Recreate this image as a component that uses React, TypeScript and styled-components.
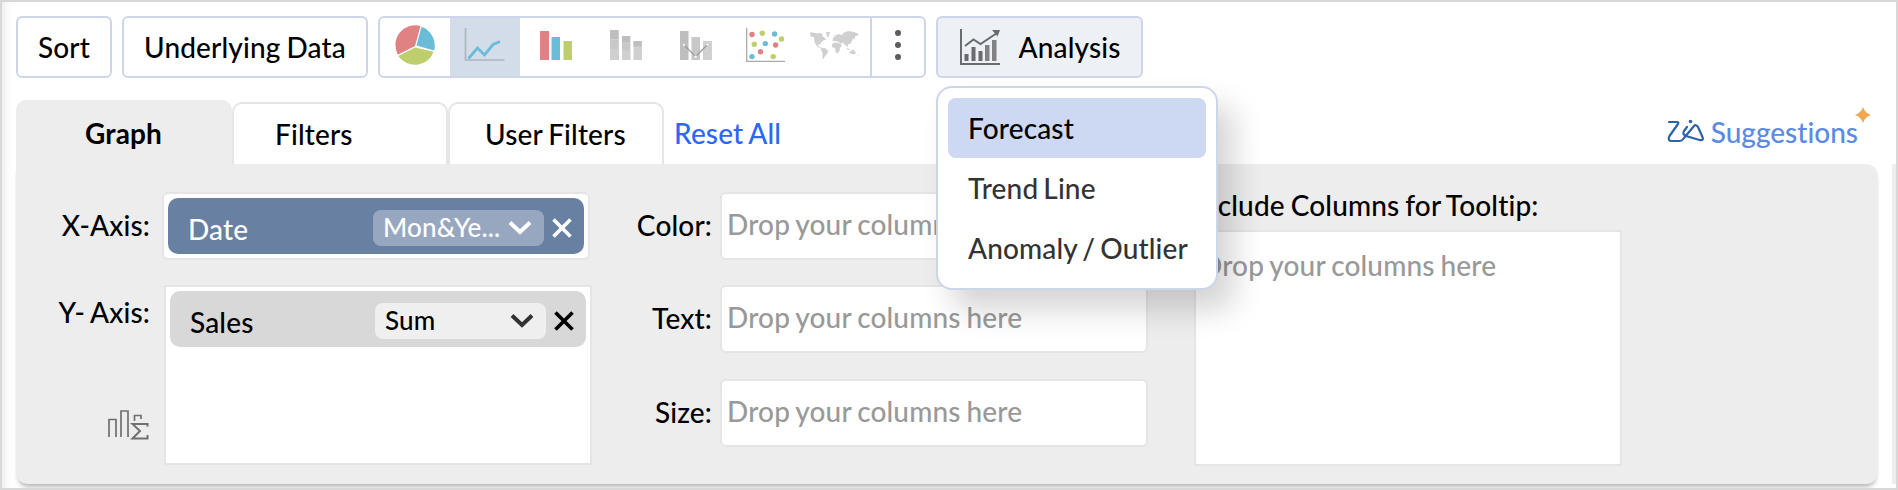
import React from "react";
import styled, { createGlobalStyle, css } from "styled-components";

const GlobalStyle = createGlobalStyle`
  * { box-sizing: border-box; }
  body { margin: 0; background: #fff; font-family: Lato, "Liberation Sans", sans-serif; font-size: 28px; font-weight: 500; line-height: 34px; letter-spacing: 0.15px; color: #000; font-variant-ligatures: none; word-spacing: -1.3px; }
  button { font: inherit; color: inherit; margin: 0; padding: 0; background: none; border: 0; word-spacing: inherit; letter-spacing: inherit; }
  svg { display: block; flex: none; }
`;

const Frame = styled.main`
  width: 1898px;
  height: 490px;
  border: 2px solid #d8d8d8;
  padding: 14px 0 0 14px;
  overflow: hidden;
  position: relative;
  box-shadow: inset 9px 0 8px -6px rgba(0, 0, 0, 0.08);
`;

const Toolbar = styled.div`
  display: flex;
  gap: 10px;
  height: 62px;
`;

const ToolButton = styled.button<{ $width: number; $active?: boolean }>`
  display: flex;
  align-items: center;
  justify-content: center;
  width: ${(p) => p.$width}px;
  height: 62px;
  border: 2px solid #cdd5ea;
  border-radius: 6px;
  background: ${(p) => (p.$active ? "#edf0f5" : "#fff")};
`;

const AnalysisLabel = styled.span`
  margin-left: 18px;
`;

const ChartGroup = styled.div`
  display: flex;
  width: 548px;
  border: 2px solid #cdd5ea;
  border-radius: 6px;
  overflow: hidden;
`;

const ChartButton = styled.button<{ $selected?: boolean }>`
  width: 70px;
  height: 58px;
  background: ${(p) => (p.$selected ? "#d2dde9" : "transparent")};
`;

const MoreButton = styled.button`
  flex: 1;
  border-left: 2px solid #cdd5ea;
`;

const AnalysisAnchor = styled.div`
  position: relative;
`;

const Menu = styled.ul`
  position: absolute;
  z-index: 2;
  top: 70px;
  left: 0;
  width: 282px;
  height: 204px;
  margin: 0;
  padding: 10px;
  list-style: none;
  background: #fff;
  border: 2px solid #cdd5ea;
  border-radius: 16px;
  box-shadow: 16px 20px 30px rgba(0, 0, 0, 0.17);
`;

const MenuItem = styled.li<{ $active?: boolean }>`
  height: 60px;
  padding: 13px 0 0 20px;
  border-radius: 8px;
  white-space: nowrap;
  word-spacing: -2.2px;
  color: ${(p) => (p.$active ? "#000" : "#333")};
  background: ${(p) => (p.$active ? "#cdd9f3" : "transparent")};
`;

const TabRow = styled.div`
  display: flex;
  align-items: flex-end;
  height: 64px;
  margin-top: 22px;
`;

const Tab = styled.button<{ $active?: boolean; $shift: number }>`
  width: 216px;
  height: 62px;
  padding: 0 0 0 ${(p) => p.$shift}px;
  text-align: left;
  background: #fff;
  border: 2px solid #e5e5e5;
  border-bottom: 0;
  border-radius: 10px 10px 0 0;
  ${(p) =>
    p.$active &&
    css`
      height: 64px;
      font-weight: 700;
      background: #ededed;
      border-color: #ededed;
    `}
`;

const ResetLink = styled.a`
  align-self: center;
  margin-left: 10px;
  padding-top: 2px;
  color: #2c66fb;
`;

const Suggestions = styled.div`
  display: flex;
  align-items: center;
  align-self: stretch;
  margin-left: auto;
  padding-right: 25px;
  color: #5b8ae6;
`;

const SuggestionsText = styled.span`
  margin: 0 0 0 6px;
  letter-spacing: 0;
`;

const Spark = styled.svg`
  margin: -34px 0 0 -3px;
`;

const PanelRow = styled.div`
  display: flex;
  justify-content: space-between;
  height: 320px;
`;

const Panel = styled.section`
  display: flex;
  width: 1862px;
  height: 320px;
  background: #ededed;
  border-radius: 0 12px 12px 12px;
  box-shadow: 0 5px 4px -2px rgba(0, 0, 0, 0.28);
`;

const SideEdge = styled.div`
  width: 4px;
  background: #ededed;
`;

const LabelColumn = styled.div<{ $width: number }>`
  width: ${(p) => p.$width}px;
  text-align: right;
  display: flex;
  flex-direction: column;
  align-items: flex-end;
`;

const FieldLabel = styled.div<{ $gap: number }>`
  margin-top: ${(p) => p.$gap}px;
  height: 34px;
  white-space: nowrap;
`;

const AxisColumn = styled.div`
  margin-left: 12px;
  width: 430px;
  padding-top: 28px;
`;

const DropBox = styled.div<{ $height: number; $square?: boolean }>`
  width: 428px;
  height: ${(p) => p.$height}px;
  padding: 4px;
  background: #fff;
  border: 2px solid #e5e5e5;
  border-radius: ${(p) => (p.$square ? 0 : 6)}px;
`;

const YBoxRow = styled.div`
  margin: 25px 0 0 2px;
`;

const Pill = styled.div<{ $tone: "blue" | "gray" }>`
  display: flex;
  align-items: center;
  width: 416px;
  height: 56px;
  padding: 0 12px 0 20px;
  border-radius: 10px;
  color: ${(p) => (p.$tone === "blue" ? "#fff" : "#000")};
  background: ${(p) => (p.$tone === "blue" ? "#6880a1" : "#d8d8d8")};
`;

const PillName = styled.span`
  flex: 1;
  padding-top: 5px;
`;

const Select = styled.button<{ $tone: "blue" | "gray" }>`
  display: flex;
  align-items: center;
  justify-content: space-between;
  width: 171px;
  height: 36px;
  margin: 4px 8px 0 0;
  padding: 0 12px 3px 10px;
  border-radius: 8px;
  font-size: 26px;
  background: ${(p) => (p.$tone === "blue" ? "#98a7c0" : "#efefef")};
`;

const CloseIcon = styled.svg`
  margin-top: 4px;
`;

const DropColumn = styled.div`
  display: grid;
  grid-template-rows: 93px 94px 68px;
  align-content: start;
  margin-left: 8px;
  padding-top: 28px;
`;

const Placeholder = styled.div<{ $top: number }>`
  padding: ${(p) => p.$top}px 0 0 1px;
  color: #999;
  white-space: nowrap;
`;

const TooltipColumn = styled.div`
  margin-left: 46px;
  padding-top: 24px;
`;

const TooltipTitle = styled.div`
  height: 42px;
  white-space: nowrap;
`;

const Pie = () => (
  <svg width="70" height="58">
    <path d="M35 28 L40.5 7.9 A20 20 0 0 0 17.8 36.8Z" fill="#e08283" />
    <path d="M36.5 27.4 L41.5 8.8 A20 20 0 0 1 54.2 32.5Z" fill="#6bbcd7" />
    <path d="M35 29.4 L53.7 33.7 A20 20 0 0 1 18.3 38Z" fill="#bece6c" />
  </svg>
);

const Line = () => (
  <svg width="70" height="58" fill="none">
    <path d="M15.5 10V42H54.5" stroke="#b0b5bd" strokeWidth="1.7" />
    <path d="M18.5 40.5L27.5 30L34.5 37L43 26.5L50 23.5" stroke="#6bbcd7" strokeWidth="2.8" />
  </svg>
);

const Bars = () => (
  <svg width="70" height="58">
    <path d="M20 13h9v29h-9z" fill="#e08283" />
    <path d="M31.5 19h8.500v23h-8.500z" fill="#6bbcd7" />
    <path d="M43.5 23h8.500v19h-8.500z" fill="#bece6c" />
  </svg>
);

const Stacked = () => (
  <svg width="70" height="58">
    <path d="M20 12h9v30h-9zM32 18h8.500v24h-8.500zM43.500 23h8.500v19h-8.500z" fill="#d0d0d0" />
    <path d="M20 22h8v9h-8zM32 25.500h8v7h-8z" fill="#c8c8c8" />
    <path d="M20 12h8v9h-8zM32 18h8v6.500h-8zM43.500 23h8v5.500h-8z" fill="#bebebe" />
  </svg>
);

const Combo = () => (
  <svg width="70" height="58">
    <path d="M20 13h8.500v29H20z" fill="#bebebe" />
    <path d="M31.500 19h8.500v23h-8.500z" fill="#c8c8c8" />
    <path d="M43 23h9v19h-9z" fill="#d0d0d0" />
    <path d="M24 27L35.700 38.700L47.500 26.500" fill="none" stroke="#999" strokeWidth="1.2" />
    <g fill="#fff" stroke="#aaa" strokeWidth=".5">
      <circle cx="24" cy="27" r="1.4" /><circle cx="35.7" cy="38.7" r="1.5" /><circle cx="47.5" cy="26.5" r="1.4" />
    </g>
  </svg>
);

const scatterPoints: [number, number, string][] = [
  [22, 16.5, "#e08283"], [32.3, 15.3, "#bece6c"], [44.6, 16, "#6bbcd7"], [51.5, 21, "#bece6c"],
  [24.3, 26.2, "#bece6c"], [35.3, 25.6, "#6bbcd7"], [45.6, 27, "#e08283"], [30.5, 33.7, "#e08283"],
  [22, 38.6, "#6bbcd7"], [43.2, 38.6, "#bece6c"],
];

const Scatter = () => (
  <svg width="70" height="58">
    <path d="M16.7 10V43.3H55" fill="none" stroke="#aaa" strokeWidth="1.3" />
    {scatterPoints.map(([x, y, c]) => <circle key={`${x}-${y}`} cx={x} cy={y} r="2.7" fill={c} />)}
  </svg>
);

const WorldMap = () => (
  <svg width="70" height="58" fill="#d0d0d0">
    <path d="M10 14.500L13 14.500L17 15.500L20 15L23 16.500L22 18L24.500 19.500L26 22L23 22.500L20.500 25L20.500 27L18 26L18.500 28.500L22 30L21 30.500L17 28.500L14.500 24L14 19L10.500 18.500Z" />
    <path d="M26 14L30 14L28.500 19L27 18.500ZM21.500 30L25 30L28.500 33L27 36L25 38L23.500 41L22.500 40L22.500 35L21 32Z" />
    <path d="M32.500 23L33 20L36 17L39 16L42 17L44 14.500L48 13L54 14L58 15.500L58 17.500L55.500 18L54 22L53 20L52 23L50 26L48 26L47.500 29L45 27L43 24.500L41 26L39 24L36 23Z" />
    <path d="M32 26L35 24.500L39 25L42 27.500L40 30L39.500 33L37.500 35.500L35.500 34L35 30L32 29ZM49.500 34L53 31.500L56 34.500L54.500 36.500L50 35.500ZM46.500 30L48.500 30.500L51 32L47.500 31.500ZM58 37L59 37L57 39ZM33.500 17L34.500 15.500L34 18Z" />
  </svg>
);

const AnalysisIcon = () => (
  <svg width="42" height="38" fill="none">
    <path d="M2 1V36H41" stroke="#696b6d" strokeWidth="2" />
    <path d="M6 18L14.500 11.500L21.500 16L38 5" stroke="#696b6d" strokeWidth="2" />
    <path d="M33 2H41L38.500 8.500Z" fill="#696b6d" />
    <path d="M5.500 26h4v7h-4zM12.500 19h4v14h-4zM19.500 23h4v10h-4z" fill="#696b6d" />
    <path d="M26 17h4.500v16H26zM33 12h4.500v21H33z" fill="#808284" />
  </svg>
);

const SigmaBars = () => (
  <svg width="43" height="33" fill="none" stroke="#707070" strokeWidth="1.7">
    <path d="M2 30V12.500H9V30M14 30V4H21V30" />
    <path d="M27.500 14V8.500H34V12" />
    <path d="M40.500 19.500V17H25.500L33 24L25.500 31.500H40.500V28" strokeWidth="2" />
  </svg>
);

const ZiaLogo = () => (
  <svg width="38" height="26" fill="none" stroke="#2c62aa" strokeWidth="2.2" strokeLinejoin="round" strokeLinecap="round">
    <path d="M2 3H10Q12 3 11 5L2.500 17Q0 22 5 22H13Q15 22 17 19L27 7Q29 5 31 8L35.500 18Q37 22 32.500 21L19 17Q15 15 17 12L20 8" />
    <circle cx="23.5" cy="2.5" r="1.8" fill="#2c62aa" stroke="none" />
  </svg>
);

const Chevron = ({ color }: { color: string }) => (
  <svg width="24" height="16" fill="none" stroke={color} strokeWidth="4">
    <path d="M2 3.500L12 13L22 3.500" />
  </svg>
);

const Close = () => (
  <CloseIcon width="20" height="20" fill="none" stroke="currentColor" strokeWidth="3.6">
    <path d="M1.500 1.500L18.500 18.500M18.500 1.500L1.500 18.500" />
  </CloseIcon>
);

const charts = [Pie, Line, Bars, Stacked, Combo, Scatter, WorldMap];
const dropText = "Drop your columns here";

export default function App() {
  return (
    <Frame>
      <GlobalStyle />
      <Toolbar>
        <ToolButton $width={96}>Sort</ToolButton>
        <ToolButton $width={246}>Underlying Data</ToolButton>
        <ChartGroup>
          {charts.map((Icon, i) => <ChartButton key={i} $selected={i === 1}><Icon /></ChartButton>)}
          <MoreButton>
            <svg width="52" height="58" fill="#5c5c5c">
              <circle cx="26" cy="15" r="3" /><circle cx="26" cy="27" r="3" /><circle cx="26" cy="39" r="3" />
            </svg>
          </MoreButton>
        </ChartGroup>
        <AnalysisAnchor>
          <ToolButton $width={207} $active>
            <AnalysisIcon /><AnalysisLabel>Analysis</AnalysisLabel>
          </ToolButton>
          <Menu>
            <MenuItem $active>Forecast</MenuItem>
            <MenuItem>Trend Line</MenuItem>
            <MenuItem>Anomaly / Outlier</MenuItem>
          </Menu>
        </AnalysisAnchor>
      </Toolbar>
      <TabRow>
        <Tab $active $shift={67}>Graph</Tab>
        <Tab $shift={41}>Filters</Tab>
        <Tab $shift={35}>User Filters</Tab>
        <ResetLink>Reset All</ResetLink>
        <Suggestions>
          <ZiaLogo />
          <SuggestionsText>Suggestions</SuggestionsText>
          <Spark width="16" height="16" fill="#f0a850"><path d="M8 0Q10 6 16 8Q10 10 8 16Q6 10 0 8Q6 6 8 0Z" /></Spark>
        </Suggestions>
      </TabRow>
      <PanelRow>
        <Panel>
          <LabelColumn $width={134}>
            <FieldLabel $gap={44}>X-Axis:</FieldLabel>
            <FieldLabel $gap={53}>Y- Axis:</FieldLabel>
            <FieldLabel $gap={78}><SigmaBars /></FieldLabel>
          </LabelColumn>
          <AxisColumn>
            <DropBox $height={68}>
              <Pill $tone="blue">
                <PillName>Date</PillName>
                <Select $tone="blue">Mon&amp;Ye...<Chevron color="#fff" /></Select>
                <Close />
              </Pill>
            </DropBox>
            <YBoxRow>
              <DropBox $height={180} $square>
                <Pill $tone="gray">
                  <PillName>Sales</PillName>
                  <Select $tone="gray">Sum<Chevron color="#333" /></Select>
                  <Close />
                </Pill>
              </DropBox>
            </YBoxRow>
          </AxisColumn>
          <LabelColumn $width={120}>
            <FieldLabel $gap={44}>Color:</FieldLabel>
            <FieldLabel $gap={59}>Text:</FieldLabel>
            <FieldLabel $gap={60}>Size:</FieldLabel>
          </LabelColumn>
          <DropColumn>
            {["color", "text", "size"].map((k) => (
              <DropBox key={k} $height={68}><Placeholder $top={9}>{dropText}</Placeholder></DropBox>
            ))}
          </DropColumn>
          <TooltipColumn>
            <TooltipTitle>Include Columns for Tooltip:</TooltipTitle>
            <DropBox $height={236} $square><Placeholder $top={12}>{dropText}</Placeholder></DropBox>
          </TooltipColumn>
        </Panel>
        <SideEdge />
      </PanelRow>
    </Frame>
  );
}
